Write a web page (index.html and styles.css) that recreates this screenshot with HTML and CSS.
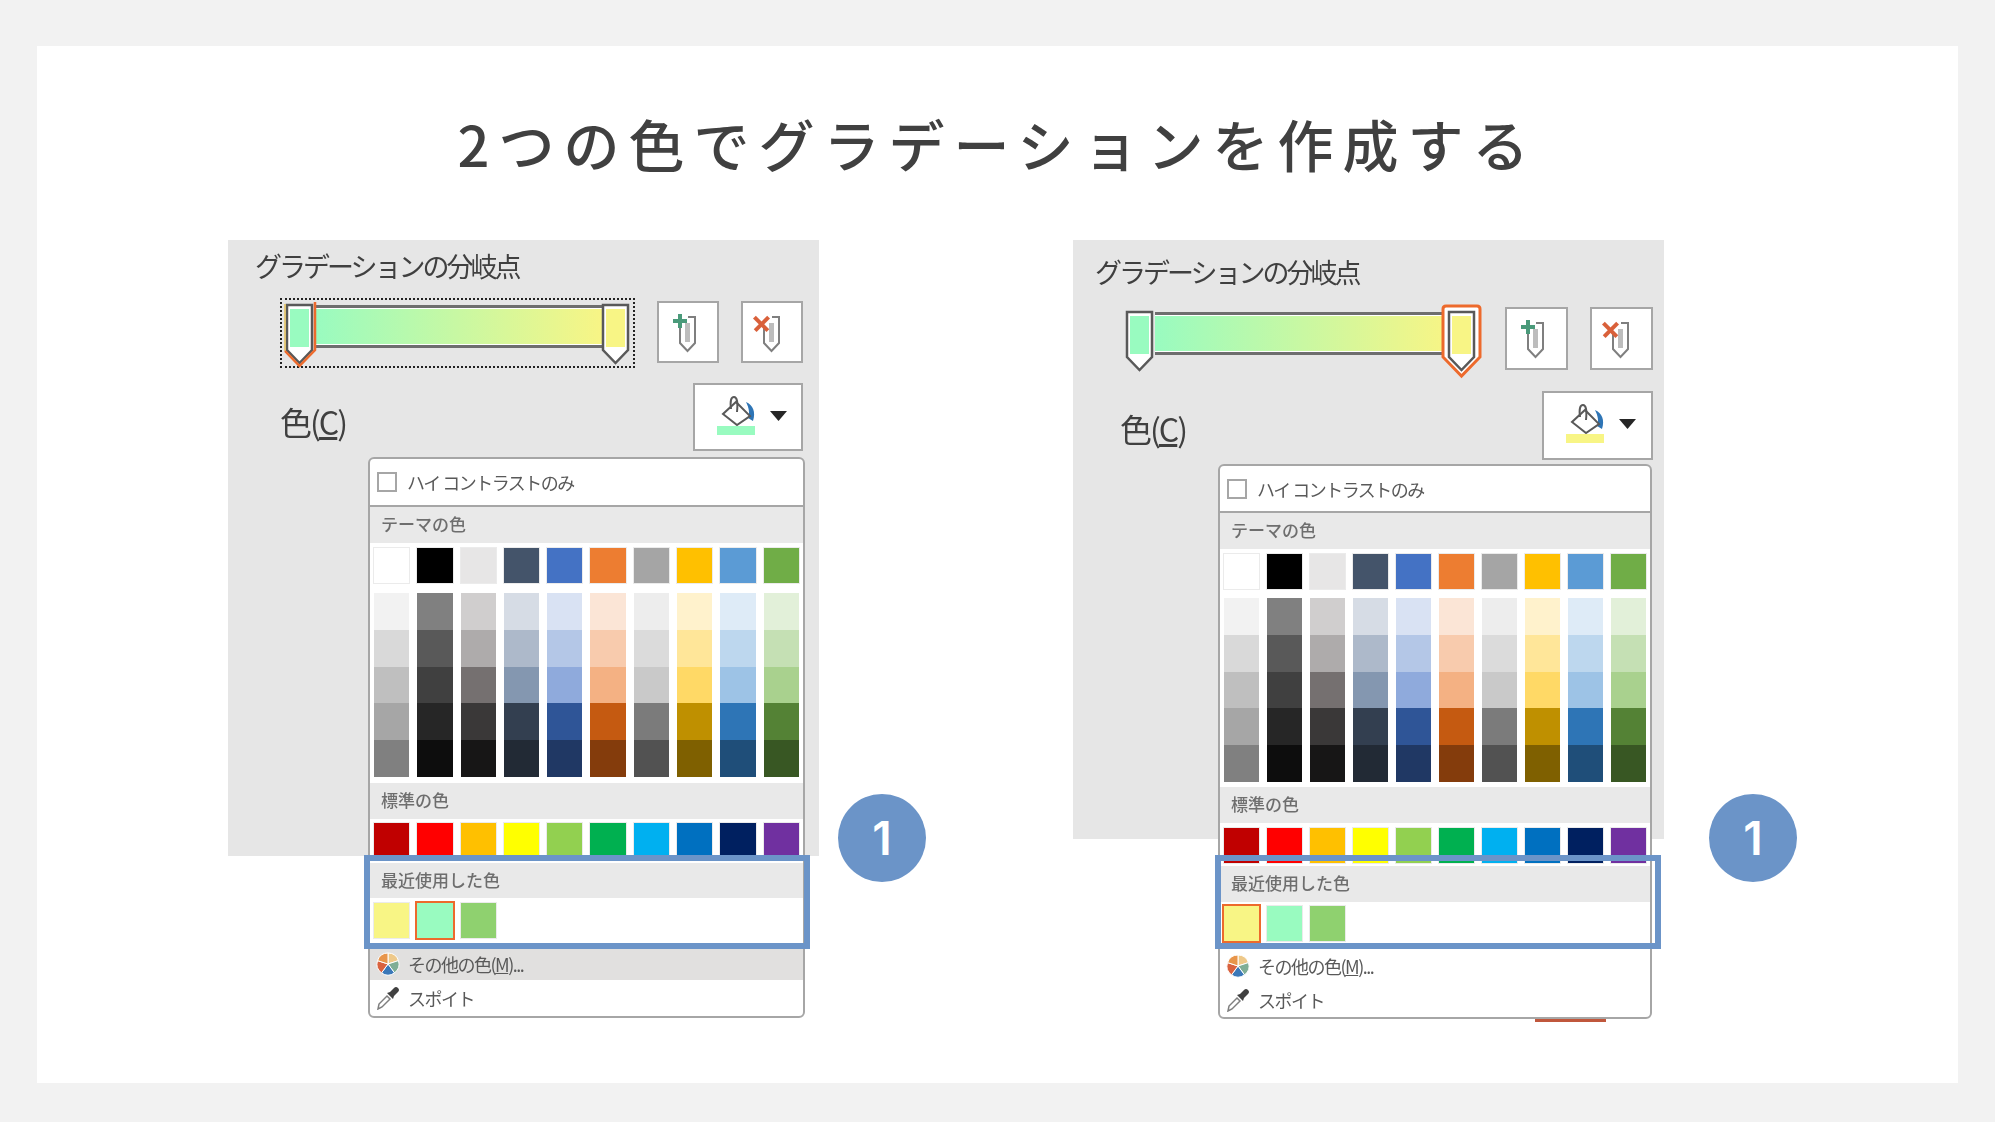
FILE: index.html
```html
<!DOCTYPE html>
<html lang="ja">
<head>
  <meta charset="UTF-8">
  <title>2つの色でグラデーションを作成する</title>
  <link rel="stylesheet" href="styles.css">
</head>
<body>
  <svg class="defs" width="0" height="0">
    <symbol id="clip" viewBox="0 0 62 62">
      <path d="M23 24V42L30.500 50L38 42V16H31" fill="none" stroke="#7f7f7f" stroke-width="2"/>
      <path d="M30.500 22V41" fill="none" stroke="#bdbdbd" stroke-width="5"/>
    </symbol>
    <symbol id="bucket" viewBox="0 0 110 68">
      <path d="M53 19C60 22 63 29 60 38L55 35C57 30 56 25 53 19Z" fill="#2e75b6"/>
      <path d="M43 19L57 33L44 42L30 31Z" fill="#fff" stroke="#595959" stroke-width="2"/>
      <path d="M38 26C37 18 38 14 41 14C44 14 45 19 44 29" fill="none" stroke="#595959" stroke-width="2"/>
      <path d="M77 28H94L85.500 38Z" fill="#262626"/>
    </symbol>
    <symbol id="pie" viewBox="0 0 24 24">
      <g stroke="#fff" stroke-width="1">
        <path d="M12 12L12 1A11 11 0 0 1 22.460 8.600Z" fill="#eec98a"/>
        <path d="M12 12L22.460 8.600A11 11 0 0 1 18.470 20.900Z" fill="#7fae96"/>
        <path d="M12 12L18.470 20.900A11 11 0 0 1 5.530 20.900Z" fill="#3b78b8"/>
        <path d="M12 12L5.530 20.900A11 11 0 0 1 1.540 8.600Z" fill="#d9623f"/>
        <path d="M12 12L1.540 8.600A11 11 0 0 1 12 1Z" fill="#e8954a"/>
      </g>
    </symbol>
    <symbol id="dropper" viewBox="0 0 24 24">
      <path d="M2 23L3 18L11 10L14 13L6 21Z" fill="#fff" stroke="#7f7f7f" stroke-width="1.500"/>
      <path d="M11 7L17 13L18 10L22 6A2.800 2.800 0 0 0 18 2L14 6Z" fill="#404040"/>
    </symbol>
  </svg>

  <main class="slide">
    <h1 class="slide-title">2つの色でグラデーションを作成する</h1>

    <div class="figures">
      <section class="figure figure-left">
        <div class="shot">
          <h2 class="grad-title">グラデーションの分岐点</h2>
          <div class="stop-row">
            <div class="stop-box">
              <div class="grad-bar">
                <svg class="stop stop-first" viewBox="0 0 30 62">
                  <path d="M2 2H27V47L14.500 60L2 47Z" fill="#fff" stroke="#595959" stroke-width="2.500"/>
                  <rect x="5" y="6" width="19" height="38" fill="#99fbc0"/>
                  <path d="M0 1V48" fill="none" stroke="#e6c25a" stroke-width="1.500"/>
                  <path d="M0 48L14.500 63L30 47V-1" fill="none" stroke="#ed6a2c" stroke-width="2.500"/>
                </svg>
                <svg class="stop stop-last" viewBox="0 0 30 62">
                  <path d="M2 2H27V47L14.500 60L2 47Z" fill="#fff" stroke="#595959" stroke-width="2.500"/>
                  <rect x="5" y="6" width="19" height="38" fill="#f8f585"/>
                </svg>
              </div>
            </div>
            <button class="tool-btn"><svg class="tool-icon"><use href="#clip"/></svg><span class="mark mark-add"></span></button>
            <button class="tool-btn tool-del"><svg class="tool-icon"><use href="#clip"/></svg><span class="mark mark-del"></span></button>
          </div>
          <div class="color-row">
            <span class="color-label">色(<u>C</u>)</span>
            <button class="fill-btn"><svg class="fill-icon"><use href="#bucket"/></svg><span class="fill-bar bar-green"></span></button>
          </div>
          <div class="dropdown">
            <div class="contrast-row"><span class="check"></span><span>ハイ コントラストのみ</span></div>
            <div class="group-head">テーマの色</div>
            <div class="theme-area">
              <div class="swatches" data-set="theme"></div>
              <div class="shades"></div>
            </div>
            <div class="group-head">標準の色</div>
            <div class="swatches std-row" data-set="standard"></div>
            <div class="group-head recent-head">最近使用した色</div>
            <div class="swatches recent-row" data-set="recent" data-active="1"></div>
            <div class="menu-row menu-hover"><svg class="menu-icon"><use href="#pie"/></svg><span>その他の色(<u>M</u>)...</span></div>
            <div class="menu-row menu-last"><svg class="menu-icon"><use href="#dropper"/></svg><span>スポイト</span></div>
          </div>
        </div>
        <div class="highlight"></div>
        <div class="step">1</div>
      </section>

      <section class="figure figure-right">
        <div class="shot">
          <h2 class="grad-title">グラデーションの分岐点</h2>
          <div class="stop-row">
            <div class="stop-box">
              <div class="grad-bar">
                <svg class="stop stop-first" viewBox="0 0 30 62">
                  <path d="M2 2H27V47L14.500 60L2 47Z" fill="#fff" stroke="#595959" stroke-width="2.500"/>
                  <rect x="5" y="6" width="19" height="38" fill="#99fbc0"/>
                </svg>
                <svg class="stop stop-last" viewBox="0 0 30 62">
                  <path d="M-4 -1Q-4 -4 -1 -4H30Q33 -4 33 -1V47L14.500 66L-4 47Z" fill="#fff" stroke="#ed6a2c" stroke-width="3"/>
                  <path d="M2 2H27V47L14.500 60L2 47Z" fill="#fff" stroke="#595959" stroke-width="2.500"/>
                  <rect x="5" y="6" width="19" height="38" fill="#f8f585"/>
                </svg>
              </div>
            </div>
            <button class="tool-btn"><svg class="tool-icon"><use href="#clip"/></svg><span class="mark mark-add"></span></button>
            <button class="tool-btn tool-del"><svg class="tool-icon"><use href="#clip"/></svg><span class="mark mark-del"></span></button>
          </div>
          <div class="color-row">
            <span class="color-label">色(<u>C</u>)</span>
            <button class="fill-btn"><svg class="fill-icon"><use href="#bucket"/></svg><span class="fill-bar bar-yellow"></span></button>
          </div>
          <div class="dropdown">
            <div class="contrast-row"><span class="check"></span><span>ハイ コントラストのみ</span></div>
            <div class="group-head">テーマの色</div>
            <div class="theme-area">
              <div class="swatches" data-set="theme"></div>
              <div class="shades"></div>
            </div>
            <div class="group-head">標準の色</div>
            <div class="swatches std-row" data-set="standard"></div>
            <div class="group-head recent-head">最近使用した色</div>
            <div class="swatches recent-row" data-set="recent" data-active="0"></div>
            <div class="menu-row"><svg class="menu-icon"><use href="#pie"/></svg><span>その他の色(<u>M</u>)...</span></div>
            <div class="menu-row menu-last"><svg class="menu-icon"><use href="#dropper"/></svg><span>スポイト</span></div>
          </div>
          <div class="peek"></div>
        </div>
        <div class="highlight"></div>
        <div class="step">1</div>
      </section>
    </div>
  </main>

  <script src="script.js"></script>
</body>
</html>
```

FILE: styles.css
```css
:root {
  --blue: #6b94c8;
  --text: #595959;
}

* {
  box-sizing: border-box;
  margin: 0;
  padding: 0;
}

body {
  width: 1995px;
  height: 1122px;
  padding: 46px 37px 39px;
  overflow: hidden;
  background: #f2f2f2;
  font-family: "Noto Sans CJK JP", "Noto Sans", sans-serif;
}

.defs {
  position: absolute;
}

.slide {
  height: 1037px;
  background: #fff;
}

.slide-title {
  padding-top: 60px;
  height: 194px;
  line-height: 74px;
  text-align: center;
  font-size: 56px;
  font-weight: 500;
  letter-spacing: 9px;
  color: #404040;
}

.figures {
  display: flex;
  gap: 254px;
  padding-left: 191px;
}

.figure {
  position: relative;
  width: 591px;
}

.figure::before {
  content: '';
  position: absolute;
  top: 0;
  left: 0;
  width: 100%;
  height: 616px;
  background: #e6e6e6;
}

.figure-right::before {
  height: 599px;
}

.shot {
  position: relative;
  filter: blur(0.5px);
}

.grad-title {
  height: 40px;
  padding: 12px 0 0 27px;
  font-size: 27px;
  line-height: 28px;
  font-weight: 400;
  letter-spacing: -3px;
  color: #404040;
  white-space: nowrap;
}

.figure-right .grad-title {
  height: 46px;
  padding: 18px 0 0 22px;
}

.stop-row {
  display: flex;
  gap: 22px;
  height: 70px;
  margin-top: 18px;
  padding: 0 16px 0 52px;
}

.figure-right .stop-row {
  height: 71px;
  margin-top: 19px;
  padding: 0 11px 0 47px;
}

.stop-box {
  width: 355px;
  margin-right: 0;
  padding: 5px 30px 0 33px;
  border: 2px dotted #222;
}

.figure-right .stop-box {
  width: 361px;
  border-color: transparent;
}

.grad-bar {
  position: relative;
  height: 43px;
  border: solid #6e6e6e;
  border-width: 3px 0;
  background: linear-gradient(90deg, #99fbc0, #f8f585);
  box-shadow: inset 0 1px 0 #fff, inset 0 -1px 0 #fff;
}

.stop {
  position: absolute;
  top: -5px;
  width: 30px;
  height: 62px;
  overflow: visible;
}

.stop-first {
  left: -30px;
}

.stop-last {
  right: -28px;
}

.tool-btn {
  position: relative;
  flex: none;
  width: 62px;
  height: 62px;
  margin-top: 3px;
  margin-left: auto;
  border: 2px solid #a6a6a6;
  background: #fff;
}

.tool-del {
  margin-left: 0;
}

.figure-right .tool-btn {
  width: 63px;
  height: 63px;
  margin-top: 2px;
}

.tool-icon {
  display: block;
  position: absolute;
  top: -2px;
  left: -2px;
  width: 62px;
  height: 62px;
}

.mark {
  position: absolute;
  top: 11px;
  left: 14px;
  width: 14px;
  height: 14px;
  background:
    linear-gradient(#4a9a7a, #4a9a7a) center / 100% 4px no-repeat,
    linear-gradient(#4a9a7a, #4a9a7a) center / 4px 100% no-repeat;
}

.mark-del {
  left: 9px;
  width: 19px;
  height: 19px;
  background:
    linear-gradient(#d9603a, #d9603a) center / 100% 4px no-repeat,
    linear-gradient(#d9603a, #d9603a) center / 4px 100% no-repeat;
  transform: rotate(45deg);
}

.color-row {
  display: flex;
  justify-content: space-between;
  align-items: flex-start;
  margin-top: 15px;
  padding: 0 16px 0 52px;
}

.figure-right .color-row {
  padding: 0 11px 0 47px;
}

.color-label {
  margin-top: 20px;
  font-size: 32px;
  line-height: 36px;
  letter-spacing: -2px;
  color: #404040;
}

.figure-right .color-label {
  margin-top: 19px;
}

.fill-btn {
  position: relative;
  width: 110px;
  height: 68px;
  border: 2px solid #a6a6a6;
  background: #fff;
}

.figure-right .fill-btn {
  width: 111px;
  height: 69px;
}

.fill-icon {
  position: absolute;
  top: -2px;
  left: -2px;
  width: 110px;
  height: 68px;
}

.fill-bar {
  position: absolute;
  top: 41px;
  left: 22px;
  width: 38px;
  height: 9px;
}

.bar-green {
  background: #99fbc0;
}

.bar-yellow {
  background: #f8f585;
}

.dropdown {
  width: 437px;
  height: 561px;
  margin: 6px 0 0 140px;
  border: 2px solid #a6a6a6;
  border-radius: 6px;
  background: #fff;
  overflow: hidden;
  font-size: 18px;
  letter-spacing: -1.5px;
  color: var(--text);
}

.figure-right .dropdown {
  width: 434px;
  height: 555px;
  margin: 4px 0 0 145px;
}

.contrast-row {
  display: flex;
  align-items: center;
  gap: 10px;
  height: 48px;
  padding-left: 7px;
  border-bottom: 2px solid #a6a6a6;
}

.figure-right .contrast-row {
  height: 47px;
}

.check {
  width: 20px;
  height: 20px;
  border: 2px solid #a6a6a6;
  background: #fff;
}

.group-head {
  height: 36px;
  padding-left: 11px;
  line-height: 34px;
  background: #e9e9e9;
  font-size: 17px;
  letter-spacing: 0;
  color: #6e6e6e;
  font-weight: 500;
}

.theme-area {
  padding: 5px 0 6px;
}

.figure-right .theme-area {
  padding: 5px 0 5px;
}

.swatches {
  display: grid;
  grid-template-columns: repeat(10, 1fr);
  gap: 8px;
  padding: 0 4px;
}

.swatch {
  height: 35px;
  box-shadow: 0 0 0 1px rgba(0, 0, 0, 0.08);
}

.shades {
  display: grid;
  grid-template-columns: repeat(10, 1fr);
  gap: 8px;
  margin-top: 10px;
  padding: 0 4px;
}

.figure-right .shades {
  margin-top: 9px;
}

.shade {
  height: 36.8px;
}

.std-row {
  padding-top: 4px;
  padding-bottom: 5px;
}

.figure-right .std-row {
  padding-top: 5px;
  padding-bottom: 3px;
}

.recent-head {
  height: 35px;
}

.figure-right .recent-head {
  height: 36px;
}

.recent-row {
  height: 51px;
  padding-top: 5px;
}

.figure-right .recent-row {
  height: 49px;
  padding-top: 4px;
}

.swatch-active {
  outline: 2px solid #ed6a2c;
}

.menu-row {
  display: flex;
  align-items: center;
  gap: 8px;
  height: 31px;
  padding-left: 6px;
}

.menu-hover {
  background: #e1e0df;
}

.menu-last {
  height: 37px;
}

.menu-icon {
  width: 24px;
  height: 24px;
  flex: none;
}

.peek {
  position: absolute;
  top: 779px;
  left: 462px;
  width: 71px;
  height: 3px;
  background: #c0573c;
}

.highlight {
  position: absolute;
  top: 615px;
  left: 136px;
  width: 446px;
  height: 94px;
  border: 6px solid var(--blue);
}

.figure-right .highlight {
  left: 142px;
}

.step {
  position: absolute;
  top: 554px;
  left: 610px;
  width: 88px;
  height: 88px;
  border-radius: 50%;
  background: var(--blue);
  color: #fff;
  font-family: Inter, sans-serif;
  font-size: 46px;
  font-weight: 600;
  line-height: 88px;
  text-align: center;
}

.figure-right .step {
  left: 636px;
}
```

FILE: script.js
```js
const sets = {
  theme: ['#ffffff', '#000000', '#e7e6e6', '#44546a', '#4472c4', '#ed7d31', '#a5a5a5', '#ffc000', '#5b9bd5', '#70ad47'],
  standard: ['#c00000', '#ff0000', '#ffc000', '#ffff00', '#92d050', '#00b050', '#00b0f0', '#0070c0', '#002060', '#7030a0'],
  recent: ['#f8f585', '#99fbc0', '#8fd16f']
}

const shades = [
  ['#f2f2f2', '#d9d9d9', '#bfbfbf', '#a6a6a6', '#808080'],
  ['#808080', '#595959', '#404040', '#262626', '#0d0d0d'],
  ['#d0cece', '#aeabab', '#757070', '#3a3838', '#171616'],
  ['#d6dce5', '#adb9ca', '#8497b0', '#333f50', '#222a35'],
  ['#d9e2f3', '#b4c7e7', '#8faadc', '#2f5597', '#203864'],
  ['#fbe5d6', '#f8cbad', '#f4b183', '#c55a11', '#843c0c'],
  ['#ededed', '#dbdbdb', '#c9c9c9', '#7b7b7b', '#525252'],
  ['#fff2cc', '#ffe699', '#ffd966', '#bf9000', '#7f6000'],
  ['#deebf7', '#bdd7ee', '#9dc3e6', '#2e75b6', '#1f4e79'],
  ['#e2f0d9', '#c5e0b4', '#a9d18e', '#548235', '#385723']
]

document.querySelectorAll('.swatches').forEach((row) => {
  sets[row.dataset.set].forEach((color, i) => {
    let cell = document.createElement('div')
    cell.className = 'swatch'
    if (row.dataset.active == i) cell.classList.add('swatch-active')
    cell.style.background = color
    row.appendChild(cell)
  })
})

document.querySelectorAll('.shades').forEach((grid) => {
  shades.forEach((column) => {
    let col = document.createElement('div')
    column.forEach((color) => {
      let cell = document.createElement('div')
      cell.className = 'shade'
      cell.style.background = color
      col.appendChild(cell)
    })
    grid.appendChild(col)
  })
})
```
